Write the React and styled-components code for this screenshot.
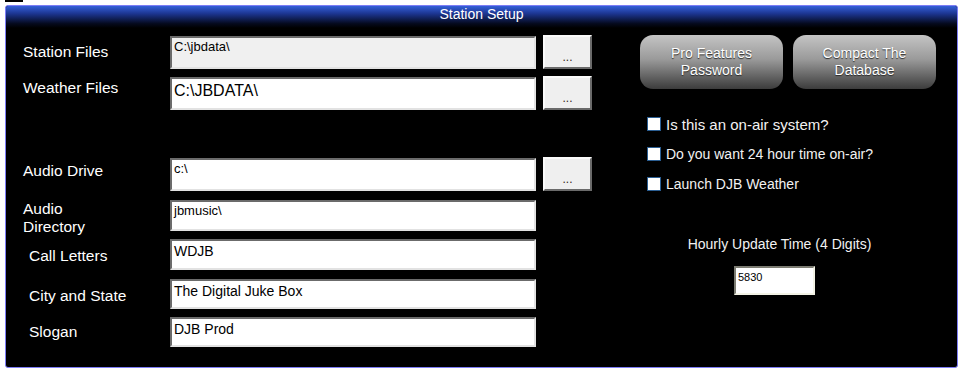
import React from "react";
import styled, { createGlobalStyle } from "styled-components";

const GlobalStyle = createGlobalStyle`
  body {
    margin: 0;
    background: #ffffff;
    font-family: "Liberation Sans", Arial, sans-serif;
  }
`;

const TopMark = styled.div`
  width: 18px;
  height: 2px;
  margin-left: 5px;
  background: #000;
`;

const Panel = styled.div`
  box-sizing: border-box;
  margin: 3px 0 0 5px;
  width: 953px;
  height: 363px;
  border: 1px solid #7d7df6;
  border-radius: 3px;
  background: #000;
  overflow: hidden;
  display: flex;
  flex-direction: column;
`;

const Header = styled.div`
  height: 22px;
  flex-shrink: 0;
  background: linear-gradient(#3560d8 0%, #1c3590 35%, #050a1e 80%, #000 100%);
  color: #fff;
  font-size: 14px;
  line-height: 16px;
  text-align: center;
`;

const Body = styled.div`
  display: flex;
  gap: 48px;
  padding: 7px 0 0 17px;
`;

const Form = styled.div`
  width: 569px;
  display: flex;
  flex-direction: column;
`;

const Row = styled.div`
  display: flex;
  align-items: center;
  height: ${(p) => p.h}px;
  margin-top: ${(p) => p.gap || 0}px;
`;

const Label = styled.div`
  box-sizing: border-box;
  width: 147px;
  flex-shrink: 0;
  padding-left: ${(p) => p.indent || 0}px;
  margin-top: ${(p) => p.down || 0}px;
  margin-bottom: ${(p) => p.up || 0}px;
  color: #fff;
  font-size: 15.5px;
  line-height: 18px;
`;

const Field = styled.div`
  box-sizing: border-box;
  width: 366px;
  height: ${(p) => p.h}px;
  padding: ${(p) => p.pt ?? 2}px 2px 0 2px;
  border: 2px solid;
  border-color: #6b6b6b #e2e2e2 #e2e2e2 #6b6b6b;
  background: ${(p) => (p.disabled ? "#f0f0f0" : "#ffffff")};
  color: #000;
  font-size: ${(p) => p.size || 13}px;
  line-height: 1.15;
  white-space: nowrap;
`;

const BrowseButton = styled.div`
  box-sizing: border-box;
  width: 49px;
  height: 34px;
  margin-left: 7px;
  padding-top: 13px;
  border: 2px solid;
  border-color: #fafafa #6a6a6a #6a6a6a #fafafa;
  background: #efefef;
  color: #3a2a1a;
  font-size: 12px;
  line-height: 14px;
  text-align: center;
`;

const Side = styled.div`
  width: 296px;
  display: flex;
  flex-direction: column;
`;

const ButtonRow = styled.div`
  display: flex;
  gap: 10px;
`;

const GrayButton = styled.div`
  box-sizing: border-box;
  width: 143px;
  height: 54px;
  display: flex;
  align-items: center;
  justify-content: center;
  border-radius: 13px;
  background: linear-gradient(#c4c4c4 0%, #9a9a9a 45%, #5e5e5e 80%, #3c3c3c 100%);
  color: #fff;
  font-size: 14px;
  line-height: 17px;
  text-align: center;
  text-shadow: 0 1px 1px #2a2a2a;
`;

const Checks = styled.div`
  display: flex;
  flex-direction: column;
  gap: 16px;
  margin: 28px 0 0 7px;
`;

const CheckRow = styled.label`
  display: flex;
  align-items: center;
  height: 14px;
  color: #f2f2f2;
  font-size: ${(p) => p.size || 14}px;
  white-space: nowrap;
`;

const Box = styled.span`
  box-sizing: border-box;
  width: 14px;
  height: 14px;
  margin-right: 5px;
  flex-shrink: 0;
  border: 1px solid #2b5e92;
  background: #fff;
`;

const Hourly = styled.div`
  width: 185px;
  margin: 45px 0 0 47px;
  display: flex;
  flex-direction: column;
  align-items: center;
`;

const HourlyLabel = styled.div`
  color: #f2f2f2;
  font-size: 14px;
  line-height: 16px;
  white-space: nowrap;
`;

const SmallInput = styled.div`
  box-sizing: border-box;
  width: 81px;
  height: 29px;
  margin: 14px 10px 0 0;
  padding: 3px 0 0 2px;
  border: 2px solid;
  border-color: #7c7c72 #f3f3e6 #f3f3e6 #7c7c72;
  background: #fff;
  color: #000;
  font-size: 11px;
  line-height: 13px;
`;

const rows = [
  { label: "Station Files", value: "C:\\jbdata\\", h: 34, fh: 33, gap: 0, disabled: true, size: 13, browse: true },
  { label: "Weather Files", value: "C:\\JBDATA\\", h: 34, fh: 33, gap: 7, size: 16, pt: 3, up: 10, browse: true },
  { label: "Audio Drive", value: "c:\\", h: 34, fh: 33, gap: 47, size: 13, up: 6, browse: true },
  { label: ["Audio", "Directory"], value: "jbmusic\\", h: 31, fh: 31, gap: 9, size: 13, down: 5 },
  { label: "Call Letters", value: "WDJB", h: 31, fh: 31, gap: 8, size: 14, down: 3, indent: 6 },
  { label: "City and State", value: "The Digital Juke Box", h: 30, fh: 30, gap: 9, size: 14, down: 4, indent: 6 },
  { label: "Slogan", value: "DJB Prod", h: 30, fh: 30, gap: 8, size: 14, indent: 6 },
];

export default function App() {
  return (
    <>
      <GlobalStyle />
      <TopMark />
      <Panel>
        <Header>Station Setup</Header>
        <Body>
          <Form>
            {rows.map((r, i) => (
              <Row key={i} h={r.h} gap={r.gap}>
                <Label indent={r.indent} up={r.up} down={r.down}>
                  {Array.isArray(r.label)
                    ? r.label.map((l) => <div key={l}>{l}</div>)
                    : r.label}
                </Label>
                <Field h={r.fh} disabled={r.disabled} size={r.size} pt={r.pt}>
                  {r.value}
                </Field>
                {r.browse && <BrowseButton>...</BrowseButton>}
              </Row>
            ))}
          </Form>
          <Side>
            <ButtonRow>
              <GrayButton>
                Pro Features
                <br />
                Password
              </GrayButton>
              <GrayButton>
                Compact The
                <br />
                Database
              </GrayButton>
            </ButtonRow>
            <Checks>
              <CheckRow size={15}>
                <Box />
                Is this an on-air system?
              </CheckRow>
              <CheckRow>
                <Box />
                Do you want 24 hour time on-air?
              </CheckRow>
              <CheckRow>
                <Box />
                Launch DJB Weather
              </CheckRow>
            </Checks>
            <Hourly>
              <HourlyLabel>Hourly Update Time (4 Digits)</HourlyLabel>
              <SmallInput>5830</SmallInput>
            </Hourly>
          </Side>
        </Body>
      </Panel>
    </>
  );
}
